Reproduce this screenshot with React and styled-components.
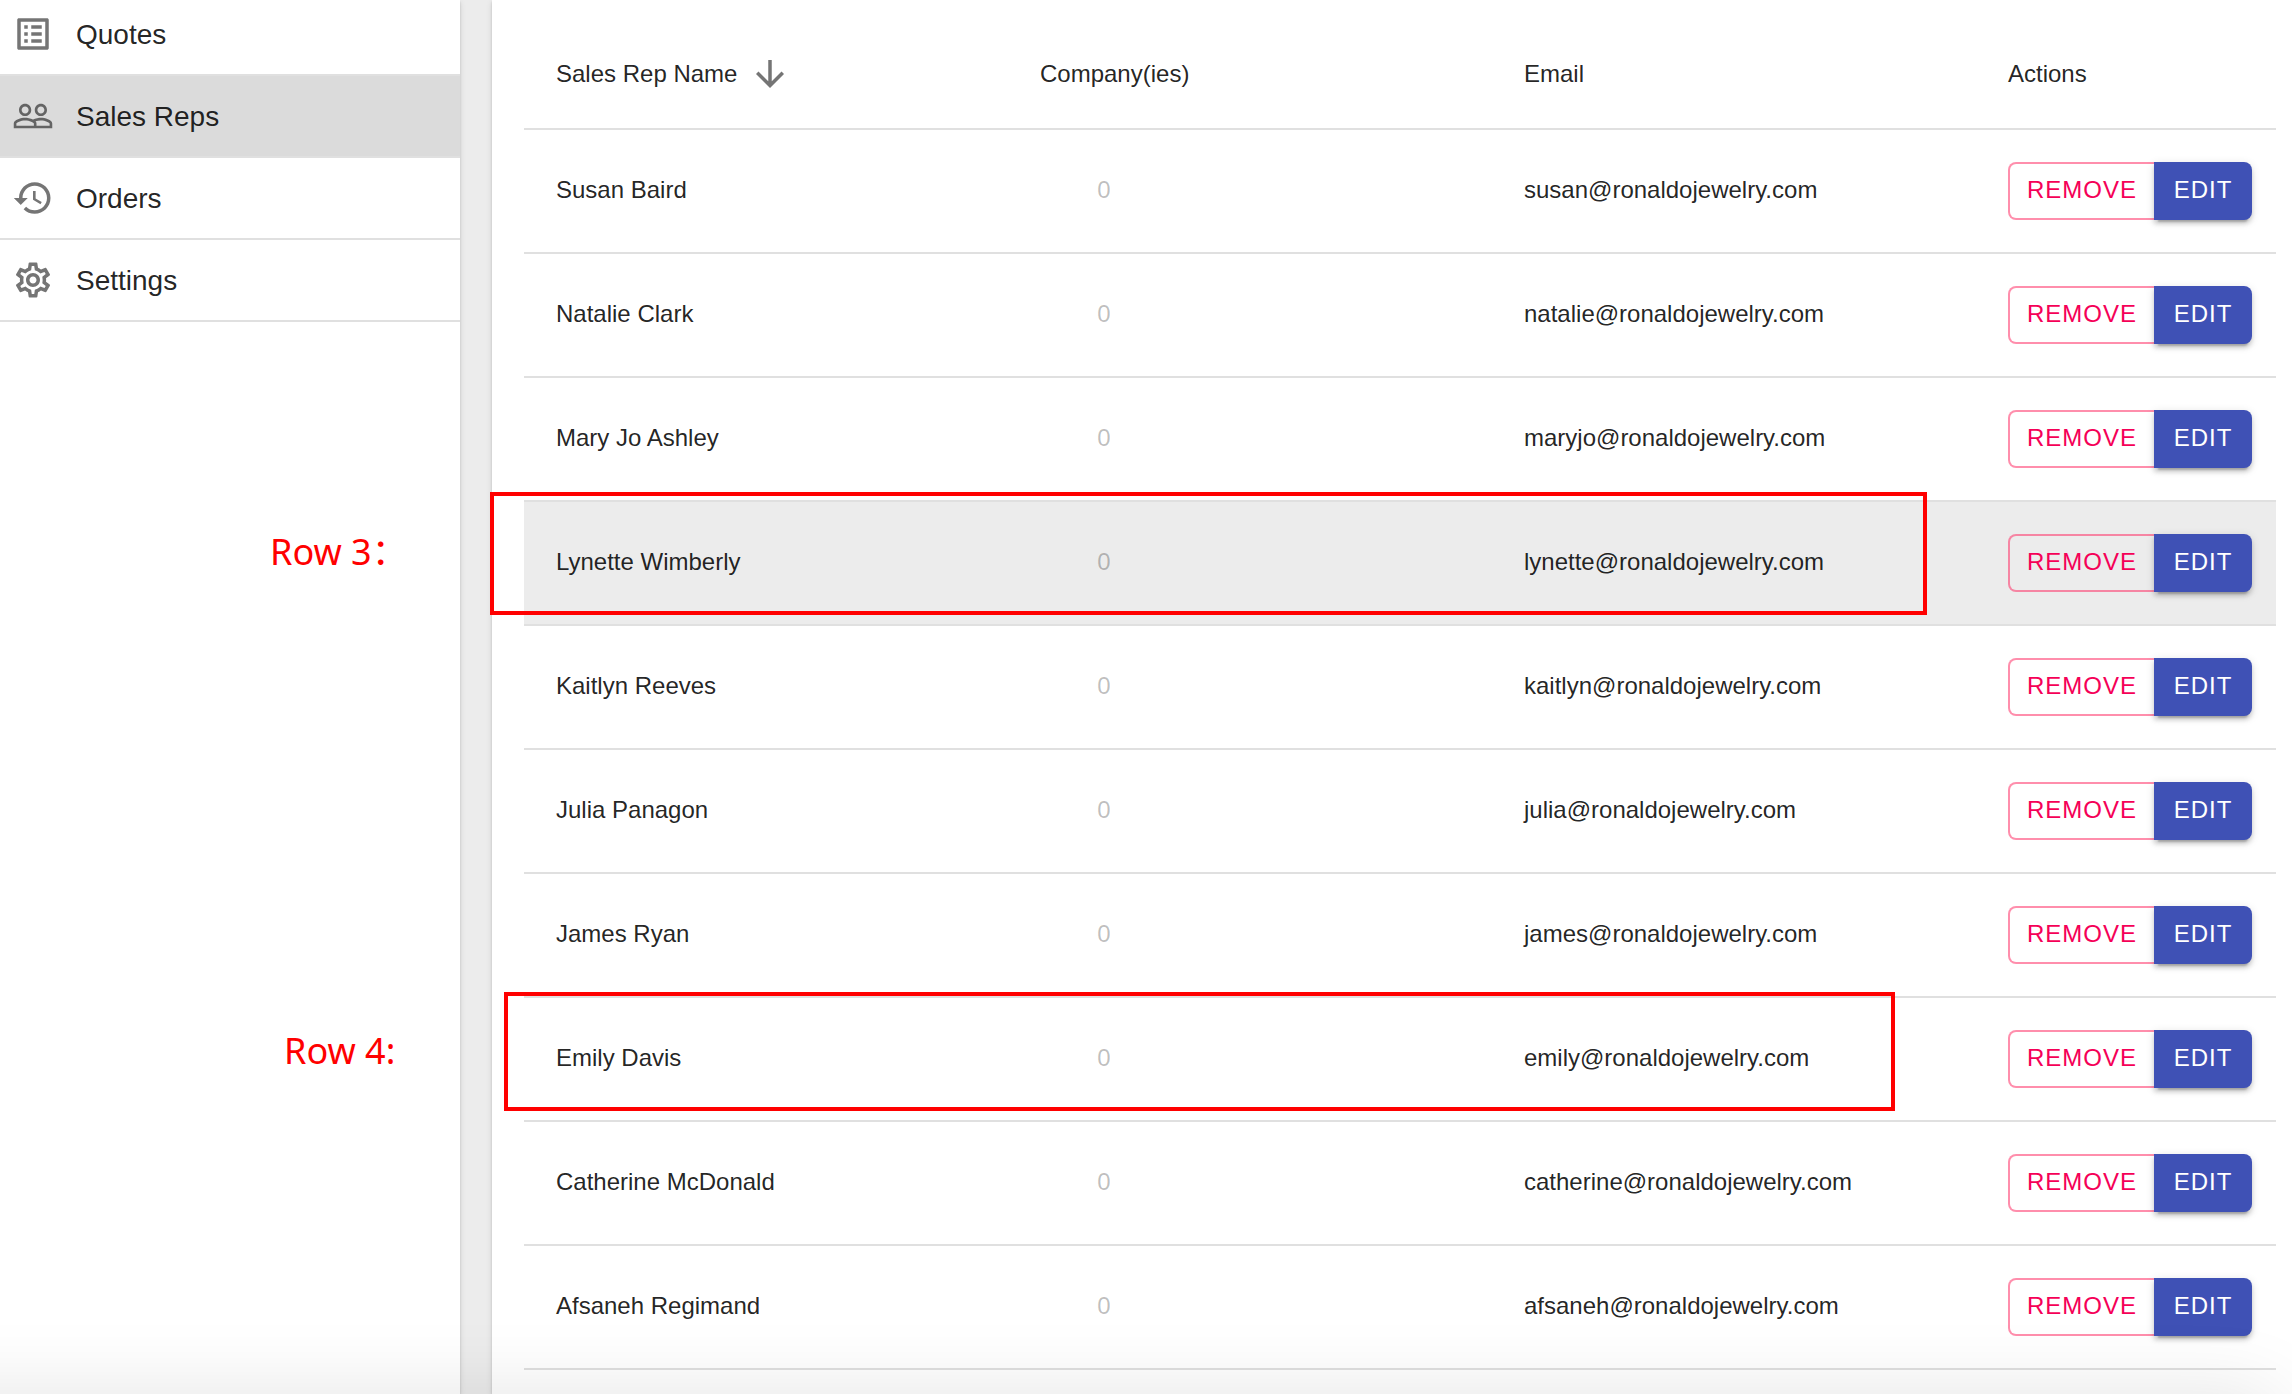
import React from "react";
import styled, { createGlobalStyle } from "styled-components";
import { MdOutlineSettings } from "react-icons/md";

const GlobalStyle = createGlobalStyle`
  *, *::before, *::after { box-sizing: border-box; }
  body {
    margin: 0;
    background: #ececec;
    color: rgba(0, 0, 0, 0.87);
    font-family: "Liberation Sans", Arial, sans-serif;
    font-size: 24px;
    line-height: 32px;
  }
  button { font: inherit; color: inherit; }
`;

const elevation =
  "0 4px 2px -2px rgba(0,0,0,0.2), 0 2px 2px 0 rgba(0,0,0,0.14), 0 2px 6px 0 rgba(0,0,0,0.12)";

const Page = styled.div`
  position: relative;
  display: flex;
  gap: 32px;
  min-height: 100vh;
  overflow: hidden;
`;

const Sidebar = styled.nav`
  flex: none;
  width: 460px;
  background: #fff;
  box-shadow: ${elevation};
`;

const NavList = styled.ul`
  list-style: none;
  margin: -6px 0 0;
  padding: 0;
`;

const NavItem = styled.li`
  border-bottom: 2px solid #e0e0e0;
`;

const NavLink = styled.a`
  display: flex;
  align-items: center;
  gap: 22px;
  height: 80px;
  padding: 0 12px;
  color: inherit;
  font-size: 28px;
  text-decoration: none;
  background: ${(p) => (p.$active ? "#dbdbdb" : "transparent")};

  svg {
    flex: none;
    width: 42px;
    height: 42px;
    color: rgba(0, 0, 0, 0.54);
  }
`;

const NavLabel = styled.span`
  padding-top: 2px;
`;

const Panel = styled.main`
  flex: 1;
  min-width: 0;
  padding: 20px 16px 24px 32px;
  background: #fff;
  box-shadow: ${elevation};
`;

const Table = styled.table`
  width: 100%;
  table-layout: fixed;
  border-collapse: separate;
  border-spacing: 0;
`;

const ActionsCol = styled.col`
  width: 300px;
`;

const HeadCell = styled.th`
  height: 110px;
  padding: 0 0 0 32px;
  border-bottom: 2px solid #e0e0e0;
  font-weight: 400;
  text-align: left;
`;

const SortButton = styled.button`
  display: inline-flex;
  align-items: center;
  gap: 12px;
  padding: 0;
  border: 0;
  background: none;
  cursor: pointer;

  svg {
    width: 42px;
    height: 42px;
    color: rgba(0, 0, 0, 0.54);
  }
`;

const Row = styled.tr`
  background: ${(p) => (p.$highlighted ? "#ececec" : "transparent")};
`;

const Cell = styled.td`
  height: 124px;
  padding: 0 0 2px 32px;
  border-bottom: 2px solid #e0e0e0;
`;

const ActionsCell = styled(Cell)`
  padding-bottom: 0;
`;

const CountButton = styled.button`
  display: block;
  width: 128px;
  padding: 0;
  border: 0;
  background: none;
  color: rgba(0, 0, 0, 0.26);
  text-align: center;
`;

const ButtonGroup = styled.div`
  display: flex;
`;

const ActionButton = styled.button`
  height: 58px;
  padding: 0 0 2px;
  letter-spacing: 1px;
  cursor: pointer;
`;

const RemoveButton = styled(ActionButton)`
  width: 146px;
  border: 2px solid rgba(255, 30, 90, 0.5);
  border-right: 0;
  border-radius: 8px 0 0 8px;
  background: none;
  color: #f50057;
`;

const EditButton = styled(ActionButton)`
  width: 98px;
  border: 0;
  border-radius: 0 8px 8px 0;
  background: #3f51b5;
  color: #fff;
  box-shadow: 0 6px 2px -4px rgba(0, 0, 0, 0.2), 0 4px 4px 0 rgba(0, 0, 0, 0.14),
    0 2px 10px 0 rgba(0, 0, 0, 0.12);
`;

const Outline = styled.div`
  position: absolute;
  top: ${(p) => p.$top}px;
  left: ${(p) => p.$left}px;
  width: ${(p) => p.$width}px;
  height: ${(p) => p.$height}px;
  border: 4px solid #f00;
  pointer-events: none;
`;

const Note = styled.div`
  position: absolute;
  top: ${(p) => p.$top}px;
  left: ${(p) => p.$left}px;
  color: #f00;
  font-family: "Noto Sans", "Noto Sans CJK SC", sans-serif;
  font-size: 36px;
  line-height: 48px;
  white-space: nowrap;
`;

const BottomShade = styled.div`
  position: fixed;
  left: -100px;
  right: 16px;
  bottom: -100px;
  height: 100px;
  box-shadow: 0 0 80px rgba(0, 0, 0, 0.11);
  pointer-events: none;
`;

const Icon = ({ d }) => (
  <svg viewBox="0 0 24 24" fill="currentColor" aria-hidden="true">
    <path d={d} />
  </svg>
);

const ListIcon = () => (
  <Icon d="M19 5v14H5V5h14m1.1-2H3.9c-.5 0-.9.4-.9.9v16.2c0 .4.4.9.9.9h16.2c.4 0 .9-.5.9-.9V3.9c0-.5-.5-.9-.9-.9zM11 7h6v2h-6V7zm0 4h6v2h-6v-2zm0 4h6v2h-6zM7 7h2v2H7zm0 4h2v2H7zm0 4h2v2H7z" />
);

const PeopleIcon = () => (
  <Icon d="M16.5 13c-1.2 0-3.07.34-4.5 1-1.43-.67-3.3-1-4.5-1C5.33 13 1 14.08 1 16.25V19h22v-2.75c0-2.17-4.33-3.25-6.5-3.25zm-4 4.5h-10v-1.25c0-.54 2.56-1.75 5-1.75s5 1.21 5 1.75v1.25zm9 0H14v-1.25c0-.46-.2-.86-.52-1.22.88-.3 1.96-.53 3.02-.53 2.44 0 5 1.21 5 1.75v1.25zM7.5 12c1.93 0 3.5-1.57 3.5-3.5S9.43 5 7.5 5 4 6.57 4 8.5 5.57 12 7.5 12zm0-5.5c1.1 0 2 .9 2 2s-.9 2-2 2-2-.9-2-2 .9-2 2-2zm9 5.5c1.93 0 3.5-1.57 3.5-3.5S18.43 5 16.5 5 13 6.57 13 8.5s1.57 3.5 3.5 3.5zm0-5.5c1.1 0 2 .9 2 2s-.9 2-2 2-2-.9-2-2 .9-2 2-2z" />
);

const HistoryIcon = () => (
  <Icon d="M13 3c-4.97 0-9 4.03-9 9H1l3.89 3.89.07.14L9 12H6c0-3.87 3.13-7 7-7s7 3.13 7 7-3.13 7-7 7c-1.93 0-3.68-.79-4.94-2.06l-1.42 1.42C8.27 19.99 10.51 21 13 21c4.97 0 9-4.03 9-9s-4.03-9-9-9zm-1 5v5l4.28 2.54.72-1.21-3.5-2.08V8H12z" />
);

const ArrowDownIcon = () => (
  <Icon d="M20 12l-1.41-1.41L13 16.17V4h-2v12.17l-5.58-5.59L4 12l8 8 8-8z" />
);

const navItems = [
  { label: "Quotes", icon: ListIcon },
  { label: "Sales Reps", icon: PeopleIcon, active: true },
  { label: "Orders", icon: HistoryIcon },
  { label: "Settings", icon: MdOutlineSettings },
];

const reps = [
  { name: "Susan Baird", user: "susan" },
  { name: "Natalie Clark", user: "natalie" },
  { name: "Mary Jo Ashley", user: "maryjo" },
  { name: "Lynette Wimberly", user: "lynette", highlighted: true },
  { name: "Kaitlyn Reeves", user: "kaitlyn" },
  { name: "Julia Panagon", user: "julia" },
  { name: "James Ryan", user: "james" },
  { name: "Emily Davis", user: "emily" },
  { name: "Catherine McDonald", user: "catherine" },
  { name: "Afsaneh Regimand", user: "afsaneh" },
];

export default function App() {
  return (
    <>
      <GlobalStyle />
      <Page>
        <Sidebar>
          <NavList>
            {navItems.map(({ label, icon: ItemIcon, active }) => (
              <NavItem key={label}>
                <NavLink href="#" $active={active} aria-current={active ? "page" : undefined}>
                  <ItemIcon />
                  <NavLabel>{label}</NavLabel>
                </NavLink>
              </NavItem>
            ))}
          </NavList>
        </Sidebar>
        <Panel>
          <Table>
            <colgroup>
              <col />
              <col />
              <col />
              <ActionsCol />
            </colgroup>
            <thead>
              <tr>
                <HeadCell scope="col" aria-sort="descending">
                  <SortButton type="button">
                    Sales Rep Name
                    <ArrowDownIcon />
                  </SortButton>
                </HeadCell>
                <HeadCell scope="col">Company(ies)</HeadCell>
                <HeadCell scope="col">Email</HeadCell>
                <HeadCell scope="col">Actions</HeadCell>
              </tr>
            </thead>
            <tbody>
              {reps.map((rep) => (
                <Row key={rep.user} $highlighted={rep.highlighted}>
                  <Cell>{rep.name}</Cell>
                  <Cell>
                    <CountButton type="button" disabled>
                      0
                    </CountButton>
                  </Cell>
                  <Cell>{`${rep.user}@ronaldojewelry.com`}</Cell>
                  <ActionsCell>
                    <ButtonGroup>
                      <RemoveButton type="button">REMOVE</RemoveButton>
                      <EditButton type="button">EDIT</EditButton>
                    </ButtonGroup>
                  </ActionsCell>
                </Row>
              ))}
            </tbody>
          </Table>
        </Panel>
        <Outline $top={492} $left={490} $width={1437} $height={123} />
        <Outline $top={992} $left={504} $width={1391} $height={119} />
        <Note $top={528} $left={270}>Row 3：</Note>
        <Note $top={1027} $left={284}>Row 4:</Note>
      </Page>
      <BottomShade />
    </>
  );
}
